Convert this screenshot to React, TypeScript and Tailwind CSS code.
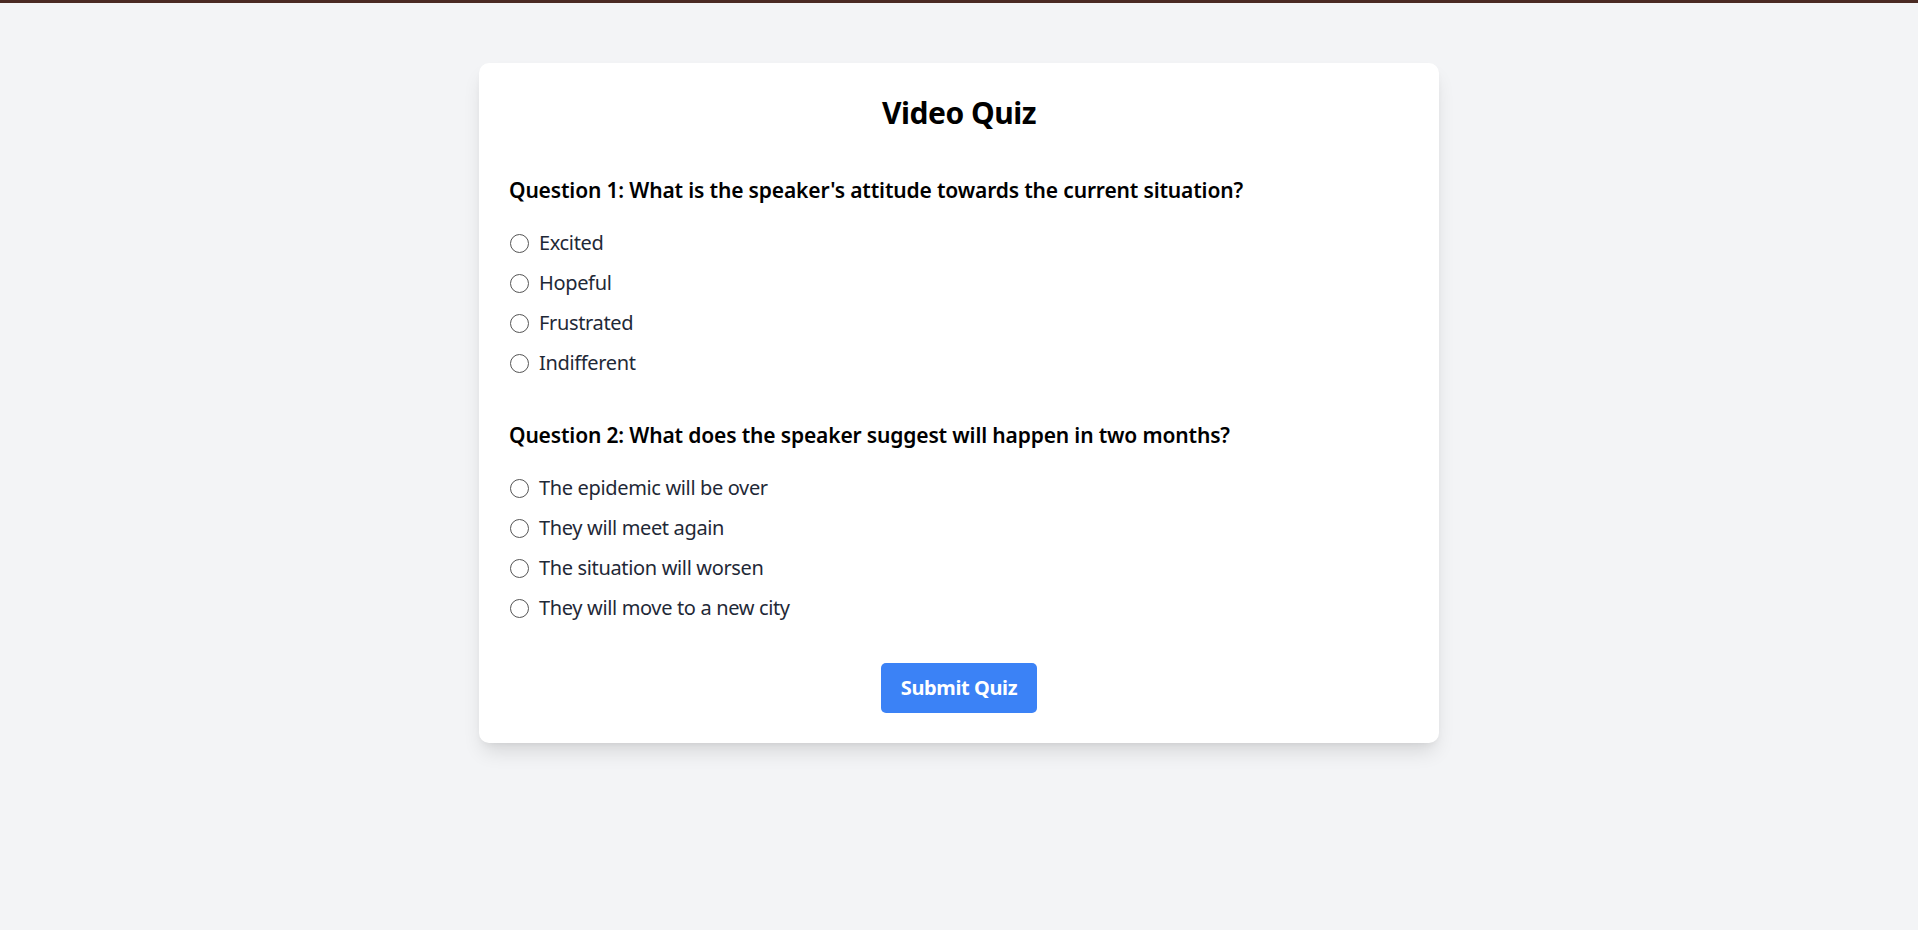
const questions = [
  {
    id: "q1",
    text: "Question 1: What is the speaker's attitude towards the current situation?",
    options: ["Excited", "Hopeful", "Frustrated", "Indifferent"],
  },
  {
    id: "q2",
    text: "Question 2: What does the speaker suggest will happen in two months?",
    options: [
      "The epidemic will be over",
      "They will meet again",
      "The situation will worsen",
      "They will move to a new city",
    ],
  },
];

function Radio() {
  return (
    <span className="ml-[1px] inline-block h-[19px] w-[19px] shrink-0 rounded-full border-[1.5px] border-[#555555] bg-white" />
  );
}

export default function App() {
  return (
    <div className="min-h-[930px] bg-[#f3f4f6] font-['Noto_Sans','Open_Sans',sans-serif]">
      <div className="h-[3px] bg-[#4a2a23]" />
      <div className="px-4 pt-[60px]">
        <div className="mx-auto w-[960px] rounded-[10px] bg-white p-[30px] shadow-[0_12px_20px_-4px_rgba(0,0,0,0.12),0_4px_8px_-4px_rgba(0,0,0,0.08)]">
          <h1 className="mb-[40px] text-center text-[30px] font-bold leading-[40px] tracking-[-0.5px] text-black">Video Quiz</h1>
          {questions.map((q) => (
            <div key={q.id} className="mb-[40px]">
              <h2 className="mb-[20px] text-[21px] font-semibold leading-[35px] tracking-[-0.15px] text-black">{q.text}</h2>
              <div className="flex flex-col gap-[10px]">
                {q.options.map((opt) => (
                  <label key={opt} className="flex h-[30px] items-center">
                    <Radio />
                    <span className="ml-[10px] text-[20px] leading-[30px] tracking-[-0.35px] text-[#1f2937]">{opt}</span>
                  </label>
                ))}
              </div>
            </div>
          ))}
          <div className="flex justify-center">
            <button className="h-[50px] rounded-[5px] bg-[#3b82f6] px-[20px] text-[20px] font-bold leading-[30px] tracking-[-0.4px] text-white">
              Submit Quiz
            </button>
          </div>
        </div>
      </div>
    </div>
  );
}
